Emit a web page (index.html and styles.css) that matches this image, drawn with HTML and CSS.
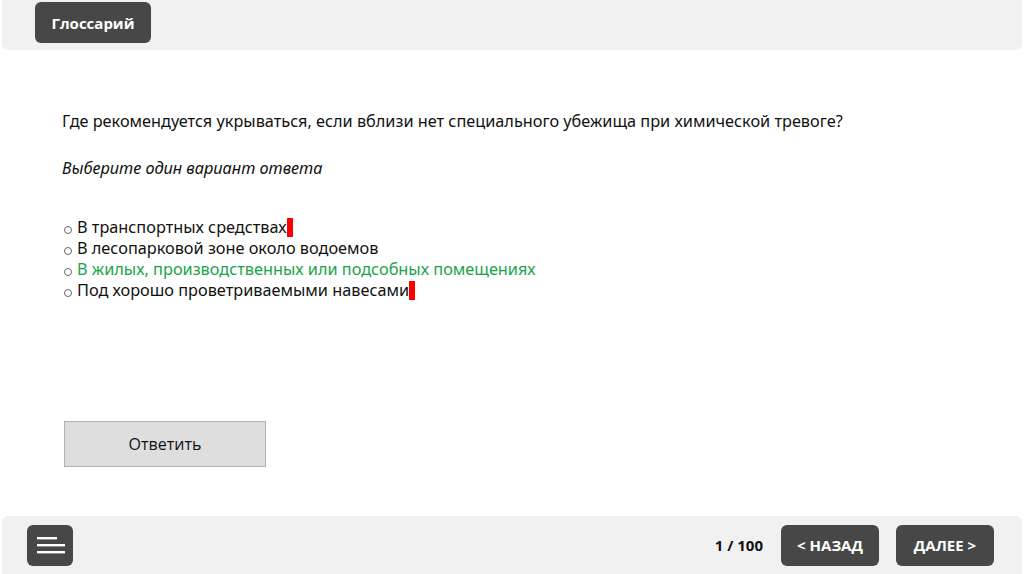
FILE: index.html
```html
<!DOCTYPE html>
<html lang="ru">
<head>
    <meta charset="UTF-8">
    <title>Тест</title>
    <link rel="stylesheet" href="styles.css">
</head>
<body>
    <div class="page">
        <div class="top-bar">
            <button class="dark-btn glossary">Глоссарий</button>
        </div>

        <div class="content">
            <p class="question">Где рекомендуется укрываться, если вблизи нет специального убежища при химической тревоге?</p>
            <p class="hint">Выберите один вариант ответа</p>

            <ul class="answers">
                <li><span class="dot"></span>В транспортных средствах<span class="mark"></span></li>
                <li><span class="dot"></span>В лесопарковой зоне около водоемов</li>
                <li class="correct"><span class="dot"></span>В жилых, производственных или подсобных помещениях</li>
                <li><span class="dot"></span>Под хорошо проветриваемыми навесами<span class="mark"></span></li>
            </ul>

            <button class="answer-btn">Ответить</button>
        </div>

        <div class="bottom-bar">
            <button class="dark-btn menu">
                <svg width="30" height="22" viewBox="0 0 30 22">
                    <rect x="2" y="3" width="20" height="2.4" fill="#fff"/>
                    <rect x="2" y="10" width="28" height="2.4" fill="#fff"/>
                    <rect x="2" y="17" width="28" height="2.4" fill="#fff"/>
                </svg>
            </button>
            <span class="counter">1 / 100</span>
            <button class="dark-btn nav">&lt; НАЗАД</button>
            <button class="dark-btn nav">ДАЛЕЕ &gt;</button>
        </div>
    </div>
</body>
</html>
```

FILE: styles.css
```css
body {
    margin: 0;
    background: #fff;
    font-family: 'Noto Sans', sans-serif;
}
.page {
    width: 1024px;
    height: 574px;
    display: flex;
    flex-direction: column;
    overflow: hidden;
}
.top-bar {
    margin: 0 2px;
    height: 50px;
    background: #f1f1f1;
    border-radius: 0 0 6px 6px;
    padding: 2px 0 0 33px;
    box-sizing: border-box;
}
.dark-btn {
    background: #474747;
    color: #fff;
    border: none;
    border-radius: 6px;
    font-family: 'Open Sans', sans-serif;
    font-weight: bold;
    font-size: 15px;
    cursor: pointer;
}
.glossary {
    width: 116px;
    height: 41px;
}
.content {
    flex: 1;
    padding: 0 0 0 62px;
    font-size: 16.3px;
    line-height: 21px;
    color: #111;
}
.question {
    margin: 61px 0 0;
}
.hint {
    margin: 26px 0 0;
    font-style: italic;
}
.answers {
    list-style: none;
    margin: 38px 0 0;
    padding: 0;
}
.answers li {
    height: 21px;
}
.answers .dot {
    display: inline-block;
    width: 6px;
    height: 6px;
    border: 1px solid #666;
    border-radius: 50%;
    margin: 0 5px 0 2px;
    vertical-align: -1px;
}
.answers .correct {
    color: #1ba34c;
}
.mark {
    display: inline-block;
    width: 6px;
    height: 19px;
    background: #ff0000;
    vertical-align: -4px;
}
.answer-btn {
    display: block;
    margin: 120px 0 0 2px;
    width: 202px;
    height: 46px;
    background: #dedede;
    border: 1px solid #b2b2b2;
    font-family: 'Open Sans', sans-serif;
    font-size: 16px;
    color: #111;
}
.bottom-bar {
    margin: 0 2px;
    height: 58px;
    background: #f1f1f1;
    border-radius: 6px 6px 0 0;
    display: flex;
    align-items: center;
    padding: 0 28px 0 25px;
}
.menu {
    width: 46px;
    height: 41px;
    display: flex;
    align-items: center;
    justify-content: center;
}
.counter {
    margin-left: auto;
    margin-right: 18px;
    font-family: 'Open Sans', sans-serif;
    font-weight: bold;
    font-size: 15px;
    color: #111;
}
.nav {
    width: 98px;
    height: 41px;
}
.nav + .nav {
    margin-left: 17px;
}
```
